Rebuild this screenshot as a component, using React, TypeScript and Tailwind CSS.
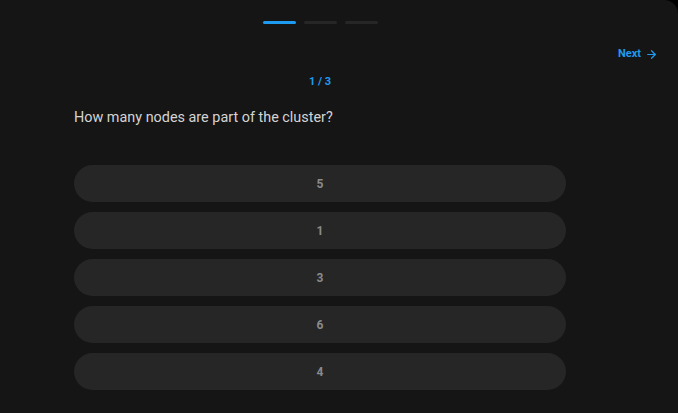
import { ArrowRight } from "lucide-react";

const options = ["5", "1", "3", "6", "4"];

export default function App() {
  return (
    <div className="h-[413px] w-[678px] bg-black font-['Roboto',sans-serif]">
      <div className="flex h-full flex-col rounded-tr-[14px] bg-[#151515] pt-[21px]">
        <div className="flex w-[492px] ml-[74px] justify-center gap-2">
          <div className="h-[3px] w-[33px] rounded-full bg-[#1d9bf0]" />
          <div className="h-[3px] w-[33px] rounded-full bg-[#262626]" />
          <div className="h-[3px] w-[33px] rounded-full bg-[#262626]" />
        </div>

        <div className="mt-[22px] flex justify-end pr-[20px]">
          <button className="flex items-center gap-1 text-[11px] font-bold leading-4 text-[#1d9bf0]">
            Next
            <ArrowRight size={13} strokeWidth={2.25} />
          </button>
        </div>

        <div className="ml-[74px] w-[492px]">
          <div className="mt-[12px] text-center text-[11px] font-bold leading-4 text-[#1d9bf0]">
            1 / 3
          </div>
          <p className="mt-[18px] text-[14.4px] leading-5 text-[#d4d4d4]">
            How many nodes are part of the cluster?
          </p>

          <div className="mt-[37px] flex flex-col gap-[10px]">
            {options.map((o) => (
              <button
                key={o}
                className="flex h-[37px] w-full items-center justify-center rounded-full bg-[#262626] text-[12px] font-bold text-[#8a8a8a]"
              >
                {o}
              </button>
            ))}
          </div>
        </div>
      </div>
    </div>
  );
}
